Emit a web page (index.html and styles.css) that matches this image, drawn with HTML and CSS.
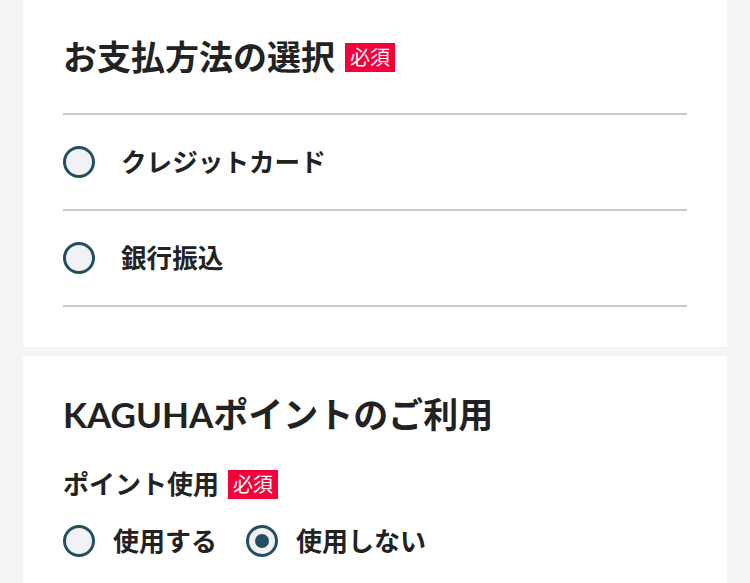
FILE: index.html
```html
<!DOCTYPE html>
<html lang="ja">
<head>
<meta charset="utf-8">
<link rel="stylesheet" href="styles.css">
</head>
<body>
<main class="page">
  <section class="card card-pay">
    <h2 class="title">お支払方法の選択<span class="badge">必須</span></h2>
    <ul class="options">
      <li class="option"><span class="radio"></span><span class="option-label">クレジットカード</span></li>
      <li class="option"><span class="radio"></span><span class="option-label">銀行振込</span></li>
    </ul>
  </section>
  <section class="card card-point">
    <h2 class="title title-point">KAGUHAポイントのご利用</h2>
    <div class="field-label">ポイント使用<span class="badge badge-sm">必須</span></div>
    <div class="choice-row">
      <label class="choice"><span class="radio"></span><span class="choice-label">使用する</span></label>
      <label class="choice"><span class="radio radio-checked"></span><span class="choice-label">使用しない</span></label>
    </div>
  </section>
</main>
</body>
</html>
```
FILE: styles.css
```css
html, body {
  margin: 0;
  padding: 0;
  background: #f4f4f4;
}
body {
  font-family: Lato, "Noto Sans CJK JP", sans-serif;
  color: #222222;
}
.page {
  display: flex;
  flex-direction: column;
  gap: 9px;
  padding: 0 23px;
}
.card {
  background: #ffffff;
  padding: 0 40px;
}
.card-pay {
  padding-top: 33px;
  padding-bottom: 40px;
}
.card-point {
  padding-top: 34px;
  padding-bottom: 40px;
}
.title {
  margin: 0;
  font-size: 34px;
  line-height: 48px;
  font-weight: 700;
  display: flex;
  align-items: center;
}
.title-point {
  font-size: 35px;
}
.badge {
  display: inline-block;
  background: #f5003b;
  color: #ffffff;
  font-size: 20px;
  line-height: 29px;
  font-weight: 400;
  padding: 0 5px;
  margin-left: 10px;
}
.options {
  list-style: none;
  margin: 32px 0 0;
  padding: 0;
  border-top: 2px solid #cacaca;
}
.option {
  height: 94px;
  border-bottom: 2px solid #cacaca;
  display: flex;
  align-items: center;
}
.radio {
  box-sizing: border-box;
  width: 32px;
  height: 32px;
  border: 3px solid #244f60;
  border-radius: 50%;
  background: #f2f2f2;
  flex: none;
  display: flex;
  align-items: center;
  justify-content: center;
}
.radio-checked::after {
  content: "";
  width: 14px;
  height: 14px;
  border-radius: 50%;
  background: #244f60;
}
.option-label {
  margin-left: 26px;
  font-size: 25.6px;
  font-weight: 700;
  line-height: 36px;
}
.field-label {
  margin-top: 28px;
  font-size: 26px;
  line-height: 36px;
  font-weight: 700;
  display: flex;
  align-items: center;
}
.badge-sm {
  margin-left: 9px;
}
.choice-row {
  margin-top: 21px;
  display: flex;
  align-items: center;
  gap: 29px;
}
.choice {
  display: flex;
  align-items: center;
  gap: 18px;
}
.choice-label {
  font-size: 26px;
  line-height: 36px;
  font-weight: 700;
}
```
